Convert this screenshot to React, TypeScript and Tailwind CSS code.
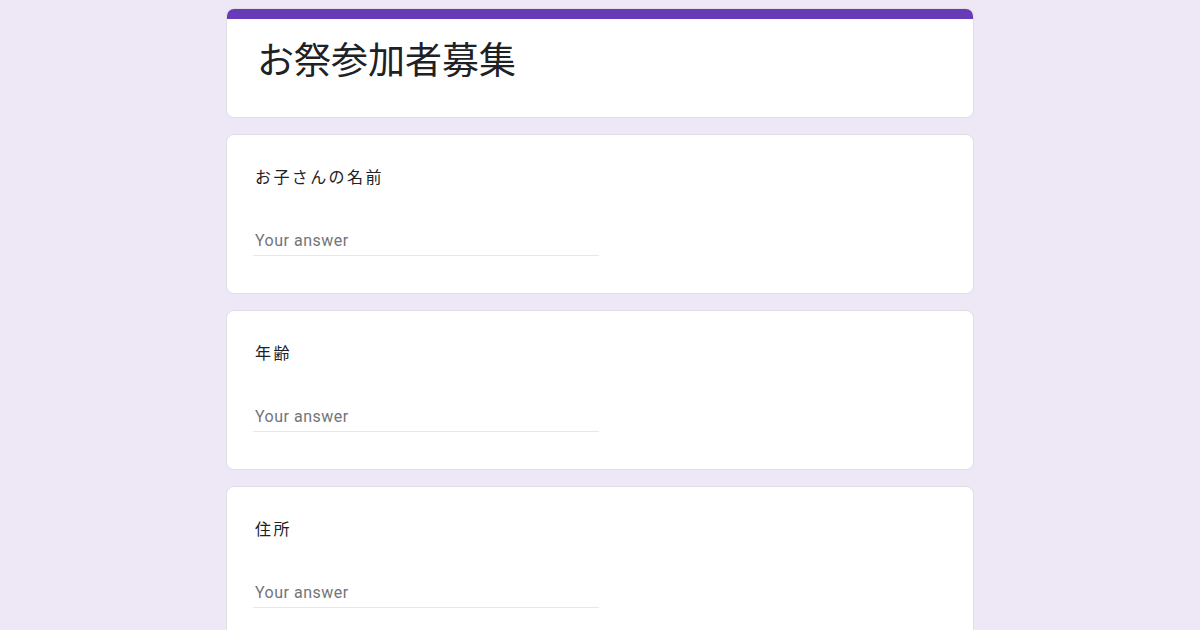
const questions = ["お子さんの名前", "年齢", "住所"];

function QuestionCard({ label }: { label: string }) {
  return (
    <div className="bg-white border border-[#e0dfe6] rounded-lg pt-[29px] pb-[37px] px-[28px]">
      <div className="text-[16px] leading-6 tracking-[2.4px] text-[#202124]">
        {label}
      </div>
      <div className="mt-[36px] w-[346px] h-8 flex items-center border-b border-[#e8e8ea] -ml-[2px] pl-[2px]">
        <span
          className="text-[16px] tracking-[0.5px] text-[#70757a] pt-[3px]"
          style={{ fontFamily: "Roboto, 'Noto Sans', sans-serif" }}
        >
          Your answer
        </span>
      </div>
    </div>
  );
}

export default function App() {
  return (
    <div
      className="min-h-screen w-full bg-[#ede7f6] pt-2 pb-6"
      style={{ fontFamily: "'Noto Sans CJK JP', Roboto, sans-serif" }}
    >
      <div className="w-[748px] mx-auto flex flex-col gap-4">
        <div className="bg-white border border-[#e0dfe6] rounded-lg overflow-hidden">
          <div className="h-[10px] bg-[#673ab7]" />
          <div className="px-[30px] pt-[15px] pb-[35px]">
            <h1 className="text-[37px] leading-[48px] text-[#202124]">
              お祭参加者募集
            </h1>
          </div>
        </div>
        {questions.map((q) => (
          <QuestionCard key={q} label={q} />
        ))}
      </div>
    </div>
  );
}
